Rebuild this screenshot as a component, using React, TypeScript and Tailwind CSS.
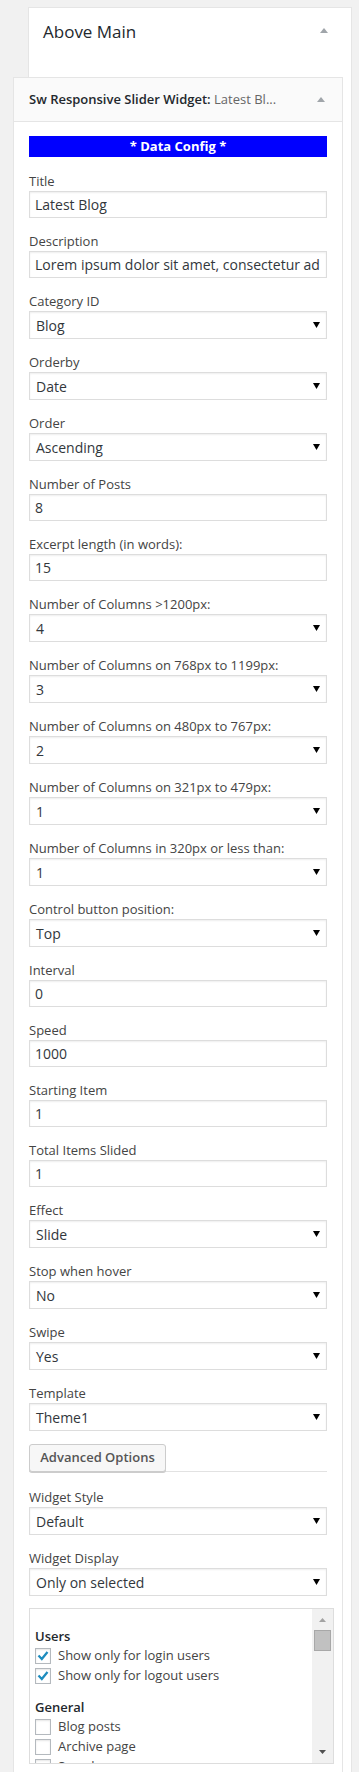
import React from "react";

type Field = { label: string; kind: "input" | "select"; value: string };

const fields: Field[] = [
  { label: "Title", kind: "input", value: "Latest Blog" },
  { label: "Description", kind: "input", value: "Lorem ipsum dolor sit amet, consectetur adipiscing elit" },
  { label: "Category ID", kind: "select", value: "Blog" },
  { label: "Orderby", kind: "select", value: "Date" },
  { label: "Order", kind: "select", value: "Ascending" },
  { label: "Number of Posts", kind: "input", value: "8" },
  { label: "Excerpt length (in words):", kind: "input", value: "15" },
  { label: "Number of Columns >1200px:", kind: "select", value: "4" },
  { label: "Number of Columns on 768px to 1199px:", kind: "select", value: "3" },
  { label: "Number of Columns on 480px to 767px:", kind: "select", value: "2" },
  { label: "Number of Columns on 321px to 479px:", kind: "select", value: "1" },
  { label: "Number of Columns in 320px or less than:", kind: "select", value: "1" },
  { label: "Control button position:", kind: "select", value: "Top" },
  { label: "Interval", kind: "input", value: "0" },
  { label: "Speed", kind: "input", value: "1000" },
  { label: "Starting Item", kind: "input", value: "1" },
  { label: "Total Items Slided", kind: "input", value: "1" },
  { label: "Effect", kind: "select", value: "Slide" },
  { label: "Stop when hover", kind: "select", value: "No" },
  { label: "Swipe", kind: "select", value: "Yes" },
  { label: "Template", kind: "select", value: "Theme1" },
];

function DownArrow() {
  return (
    <svg width="7" height="6" viewBox="0 0 7 6" className="shrink-0">
      <polygon points="0,0 7,0 3.5,6" fill="#000" />
    </svg>
  );
}

function UpToggle() {
  return (
    <svg width="8" height="5" viewBox="0 0 8 5" className="shrink-0">
      <polygon points="0,5 8,5 4,0" fill="#a0a5aa" />
    </svg>
  );
}

function Label({ text }: { text: string }) {
  return <div className="h-[20px] text-[13px] leading-[20px] text-[#444] whitespace-nowrap">{text}</div>;
}

function TextBox({ value }: { value: string }) {
  return (
    <div className="h-[27px] w-full border border-[#ddd] bg-white shadow-[inset_0_1px_2px_rgba(0,0,0,0.07)] pl-[5px] pr-[6px] flex items-center">
      <div className="overflow-hidden whitespace-nowrap text-[14px] text-[#32373c]">{value}</div>
    </div>
  );
}

function SelectBox({ value }: { value: string }) {
  return (
    <div className="h-[28px] w-full border border-[#ddd] bg-white shadow-[inset_0_1px_2px_rgba(0,0,0,0.07)] pl-[6px] pr-[6px] flex items-center justify-between">
      <div className="whitespace-nowrap text-[14px] text-[#32373c]">{value}</div>
      <DownArrow />
    </div>
  );
}

function FieldBlock({ f }: { f: Field }) {
  return (
    <div>
      <Label text={f.label} />
      {f.kind === "input" ? <TextBox value={f.value} /> : <SelectBox value={f.value} />}
    </div>
  );
}

function Checkbox({ checked }: { checked?: boolean }) {
  return (
    <div className="h-[16px] w-[16px] shrink-0 border border-[#b4b9be] bg-white shadow-[inset_0_1px_2px_rgba(0,0,0,0.1)] relative">
      {checked && (
        <svg width="16" height="16" viewBox="0 0 16 16" className="absolute left-[-1px] top-[-1px]">
          <polyline points="3.5,7.5 6.8,11 12.5,4" fill="none" stroke="#1e8cbe" strokeWidth="2.3" strokeLinejoin="miter" />
        </svg>
      )}
    </div>
  );
}

function CheckRow({ text, checked }: { text: string; checked?: boolean }) {
  return (
    <div className="h-[20px] flex items-center gap-[7px]">
      <Checkbox checked={checked} />
      <span className="text-[13px] text-[#444] whitespace-nowrap">{text}</span>
    </div>
  );
}

export default function App() {
  return (
    <div className="h-[1772px] overflow-hidden bg-[#f1f1f1] pt-[7px] font-['Open_Sans',sans-serif]">
      <div className="ml-[28px] mr-[7px] h-[1800px] border border-b-0 border-[#e5e5e5] bg-white">
        <div className="h-[69px] flex justify-between pl-[14px] pr-[23px]">
          <h2 className="pt-[12px] text-[17px] leading-[23px] text-[#23282d]">Above Main</h2>
          <div className="pt-[20px]">
            <UpToggle />
          </div>
        </div>

        <div className="-ml-[16px] w-[330px] border border-b-0 border-[#e5e5e5] bg-white">
          <div className="h-[44px] bg-[#fafafa] border-b border-[#e5e5e5] pl-[15px] pr-[17px] flex justify-between">
            <div className="pt-[12px] text-[13px] leading-[18px] whitespace-nowrap">
              <span className="font-semibold text-[#23282d]">Sw Responsive Slider Widget:</span>
              <span className="text-[#666]"> Latest Bl...</span>
            </div>
            <div className="pt-[19px]">
              <UpToggle />
            </div>
          </div>

          <div className="px-[15px] pt-[14px] pb-[40px]">
            <div className="h-[21px] bg-[#0000ff] text-white font-bold text-[13px] flex items-center justify-center">
              * Data Config *
            </div>

            <div className="mt-[14px] flex flex-col gap-[13px]">
              {fields.map((f) => (
                <FieldBlock key={f.label} f={f} />
              ))}
            </div>

            <div className="mt-[13px] h-[28px] flex items-end border-b border-[#e2e2e2]">
              <div className="-mb-px h-[28px] w-[137px] rounded-[3px] border border-[#cccccc] bg-[#f7f7f7] shadow-[0_1px_0_#cccccc] flex items-center justify-center text-[13px] font-semibold text-[#555]">
                Advanced Options
              </div>
            </div>

            <div className="mt-[15px]">
              <FieldBlock f={{ label: "Widget Style", kind: "select", value: "Default" }} />
            </div>
            <div className="mt-[13px]">
              <FieldBlock f={{ label: "Widget Display", kind: "select", value: "Only on selected" }} />
            </div>

            <div className="mt-[12px] h-[156px] w-[305px] border border-[#dddddd] bg-white flex overflow-hidden">
              <div className="flex-1 pl-[5px] pt-[17px] overflow-hidden">
                <div className="h-[20px] text-[13px] leading-[20px] font-semibold text-[#23282d]">Users</div>
                <CheckRow text="Show only for login users" checked />
                <CheckRow text="Show only for logout users" checked />
                <div className="mt-[11px] h-[20px] text-[13px] leading-[20px] font-semibold text-[#23282d]">General</div>
                <CheckRow text="Blog posts" />
                <CheckRow text="Archive page" />
                <CheckRow text="Search page" />
              </div>
              <div className="w-[21px] shrink-0 bg-[#f1f1f1] flex flex-col items-center">
                <svg width="7" height="4" viewBox="0 0 7 4" className="mt-[9px]">
                  <polygon points="0,4 7,4 3.5,0" fill="#a3a3a3" />
                </svg>
                <div className="mt-[8px] h-[21px] w-[17px] bg-[#c1c1c1] border border-[#a8a8a8]" />
                <div className="flex-1" />
                <svg width="7" height="4" viewBox="0 0 7 4" className="mb-[9px]">
                  <polygon points="0,0 7,0 3.5,4" fill="#505050" />
                </svg>
              </div>
            </div>
          </div>
        </div>
      </div>
    </div>
  );
}
